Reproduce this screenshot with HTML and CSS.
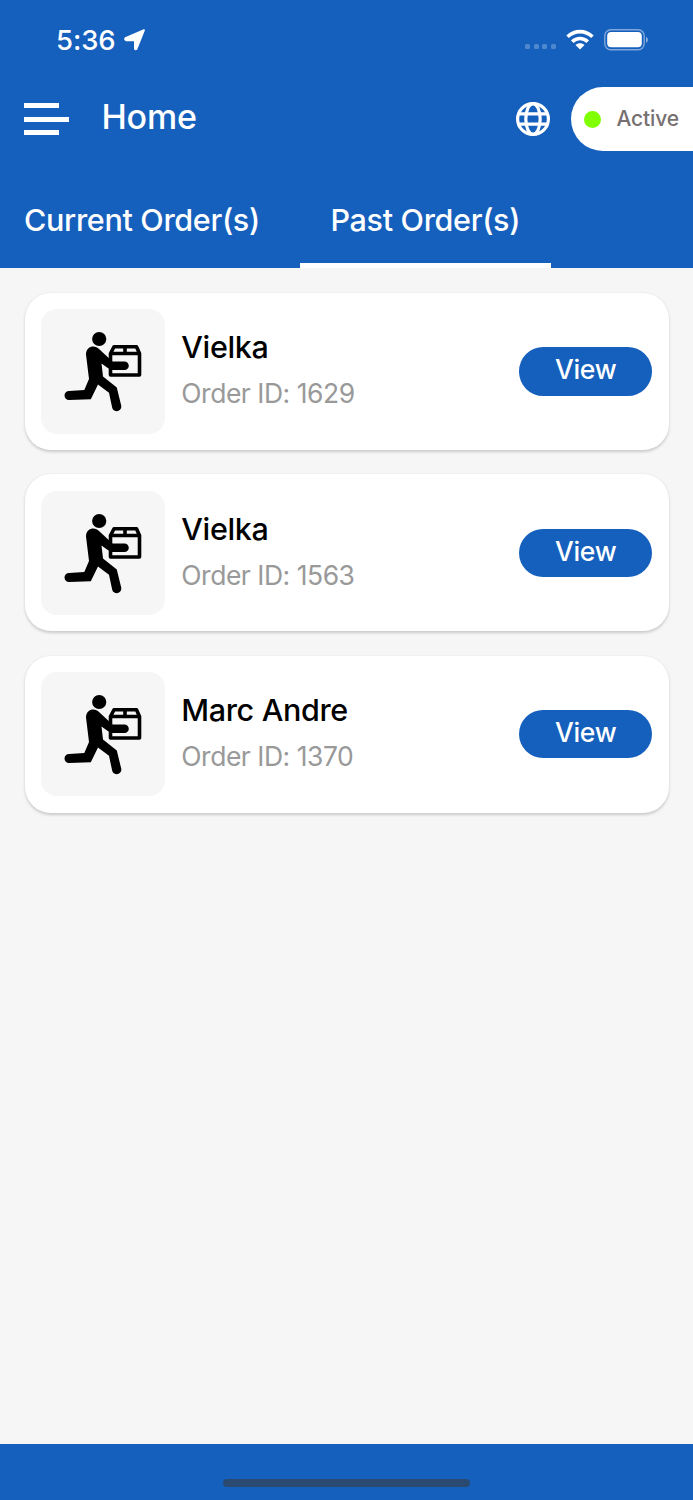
FILE: index.html
```
<!DOCTYPE html>
<html lang="en">
<head>
<meta charset="utf-8">
<title>Home</title>
<link rel="stylesheet" href="styles.css">
</head>
<body>
<svg width="0" height="0" class="defs">
  <symbol id="courier" viewBox="0 0 90 90">
    <circle cx="39.2" cy="14" r="7.1"/>
    <path d="M26 29.500C26 21 35 19.500 39 24L52.500 36.500H64.500a4.300 4.300 0 0 1 0 8.600H50.500L41.500 38.500L43 51.500L56.800 62.500L61.200 80.500a4.600 4.600 0 0 1-9 2.200L49 67.800L38 59.500L30.800 74.300L9 75a4.500 4.500 0 0 1 0-9L24.300 65L29 54Z"/>
    <path d="M50.500 37V28.500L54 21.700H76.500L79.500 28.500V50H50.500V44M50.500 28.500H79.500M65 22V28" fill="none" stroke="#000" stroke-width="3.600" stroke-linejoin="round"/>
  </symbol>
</svg>
<div class="screen">
  <header class="header">
    <div class="status">
      <span class="time">5:36</span>
      <svg class="location" width="22" height="22" viewBox="0 0 22 22"><path d="M1.500 9.200L20 1.200L12.500 20Q11.300 20.800 10.900 19.500V11.300H2Q.4 10.500 1.500 9.200Z" fill="#fff" stroke="#fff" stroke-width="1.800" stroke-linejoin="round"/></svg>
      <div class="signal"><i></i><i></i><i></i><i></i></div>
      <svg class="wifi" width="28" height="22" viewBox="0 0 28 22">
        <path d="M1.600 7.700C8.500 .9 19.500 .9 26.400 7.700M6.300 12.700C10.600 8.400 17.400 8.400 21.700 12.700" fill="none" stroke="#fff" stroke-width="3.700"/>
        <path d="M9.500 16C12 13.600 16 13.600 18.500 16L14 20.500Z" fill="#fff"/>
      </svg>
      <svg class="battery" width="45" height="22" viewBox="0 0 45 22">
        <rect x=".8" y=".8" width="39.400" height="20" rx="6" fill="none" stroke="#fff" stroke-opacity=".45" stroke-width="1.400"/>
        <rect x="3.200" y="3" width="34.600" height="15.300" rx="4" fill="#fff"/>
        <path d="M42 7.500q4 3.300 0 6.600Z" fill="#fff" fill-opacity=".5"/>
      </svg>
    </div>
    <div class="toolbar">
      <div class="menu"><i></i><i></i><i></i></div>
      <h1 class="title">Home</h1>
      <svg class="globe" width="34" height="34" viewBox="0 0 34 34" fill="none" stroke="#fff" stroke-width="3.200">
        <circle cx="17" cy="17" r="15.400"/><ellipse cx="17" cy="17" rx="7.200" ry="15.400"/><path d="M3 11.800H31M3 22.200H31"/>
      </svg>
      <div class="active"><i></i><span>Active</span></div>
    </div>
    <nav class="tabs">
      <a class="tab current">Current Order(s)</a>
      <a class="tab past">Past Order(s)</a>
    </nav>
  </header>
  <main class="orders">
    <article class="card">
      <div class="thumb"><svg width="90" height="90"><use href="#courier"/></svg></div>
      <div class="info"><h2>Vielka</h2><p>Order ID: 1629</p></div>
      <a class="view">View</a>
    </article>
    <article class="card">
      <div class="thumb"><svg width="90" height="90"><use href="#courier"/></svg></div>
      <div class="info"><h2>Vielka</h2><p>Order ID: 1563</p></div>
      <a class="view">View</a>
    </article>
    <article class="card">
      <div class="thumb"><svg width="90" height="90"><use href="#courier"/></svg></div>
      <div class="info"><h2>Marc Andre</h2><p>Order ID: 1370</p></div>
      <a class="view">View</a>
    </article>
  </main>
  <footer class="footer"><div class="home-bar"></div></footer>
</div>
</body>
</html>
```
FILE: styles.css
```
* { box-sizing: border-box; margin: 0; padding: 0; }
body { background: #f6f6f6; font-family: Inter, "Liberation Sans", sans-serif; font-weight: 500; white-space: nowrap; }
svg { display: block; flex: none; }
.defs { position: absolute; }
.screen { display: flex; flex-direction: column; width: 693px; height: 1500px; overflow: hidden; }
.header { height: 268.4px; background: #1660bd; color: #fff; }
.status { display: flex; align-items: center; height: 79px; padding: 0 44px 0 56px; }
.time { width: 60px; font-size: 27.5px; line-height: 40px; letter-spacing: -.1px; }
.location { margin-left: 7.5px; }
.signal { display: flex; gap: 3.4px; margin: 14px 10px 0 auto; }
.signal i { width: 5.2px; height: 5.2px; border-radius: 1.5px; background: rgba(255,255,255,.25); }
.wifi { margin-right: 10px; }
.toolbar { display: flex; align-items: center; height: 80.4px; padding-left: 24px; }
.menu { display: grid; gap: 8.6px; width: 45px; }
.menu i { width: 35px; height: 4.9px; background: #fff; }
.menu i:nth-child(2) { width: 45px; }
.title { margin: -4px 0 0 32.5px; font-size: 34px; font-weight: 500; line-height: 40px; letter-spacing: -.2px; }
.globe { margin-left: auto; margin-right: 21px; }
.active { display: flex; align-items: center; width: 122px; height: 63.6px; padding-left: 13px; border-radius: 32px 0 0 32px; background: #fff; color: #777071; font-size: 21px; letter-spacing: -.15px; }
.active i { width: 17px; height: 17px; margin-right: 15.5px; border-radius: 50%; background: #80ff00; }
.active span { line-height: 30px; margin-top: -1px; }
.tabs { display: flex; height: 109px; }
.tab { height: 109px; padding-top: 40.6px; font-size: 30.5px; line-height: 40px; letter-spacing: -.32px; }
.current { width: 300px; padding-left: 24px; }
.past { width: 251px; padding-left: 30.5px; border-bottom: 5px solid #fff; }
.orders { display: flex; flex: 1; flex-direction: column; gap: 24.4px; padding: 24.5px 24.5px 0; }
.card { display: flex; align-items: center; height: 157px; padding: 0 16.3px; border-radius: 26px; background: #fff; box-shadow: 0 1.5px 3px rgba(0,0,0,.18); }
.thumb { display: flex; align-items: center; justify-content: center; width: 124.5px; height: 124.5px; padding: 0 0 2px 4px; border-radius: 16px; background: #f6f6f6; }
.info { flex: 1; padding: 0 0 2px 16px; }
.info h2 { font-size: 30.5px; font-weight: 500; line-height: 46px; letter-spacing: -.35px; color: #000; }
.info p { font-size: 26.5px; font-weight: 400; line-height: 46px; letter-spacing: -.48px; color: #999; }
.view { width: 133px; height: 48.5px; border-radius: 24.3px; background: #1660bd; color: #fff; font-size: 26.5px; line-height: 45px; letter-spacing: -.35px; text-align: center; }
.footer { display: flex; justify-content: center; height: 55.6px; padding-top: 34.1px; background: #1660bd; }
.home-bar { width: 247px; height: 8px; border-radius: 4px; background: #2b4a72; }
```
